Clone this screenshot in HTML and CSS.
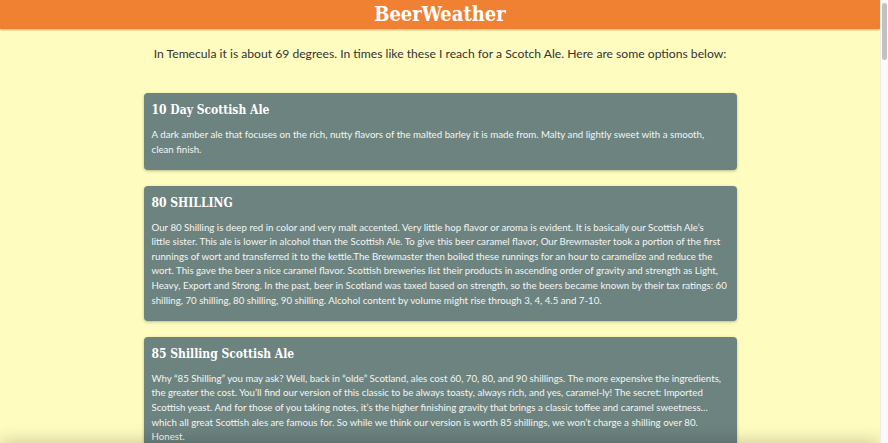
FILE: index.html
```html
<!DOCTYPE html>
<html lang="en">
<head>
<meta charset="utf-8">
<title>BeerWeather</title>
<link rel="stylesheet" href="styles.css">
</head>
<body>
<header class="topbar">
  <h1 class="brand">BeerWeather</h1>
</header>
<main class="content">
  <p class="intro">In Temecula it is about 69 degrees. In times like these I reach for a Scotch Ale. Here are some options below:</p>
  <section class="beers">
    <article class="beer">
      <h2 class="beer-name">10 Day Scottish Ale</h2>
      <p class="beer-desc">A dark amber ale that focuses on the rich, nutty flavors of the malted barley it is made from. Malty and lightly sweet with a smooth, clean finish.</p>
    </article>
    <article class="beer">
      <h2 class="beer-name">80 SHILLING</h2>
      <p class="beer-desc">Our 80 Shilling is deep red in color and very malt accented. Very little hop flavor or aroma is evident. It is basically our Scottish Ale’s<br>little sister. This ale is lower in alcohol than the Scottish Ale. To give this beer caramel flavor, Our Brewmaster took a portion of the first runnings of wort and transferred it to the kettle.The Brewmaster then boiled these runnings for an hour to caramelize and reduce the wort. This gave the beer a nice caramel flavor. Scottish breweries list their products in ascending order of gravity and strength as Light, Heavy, Export and Strong. In the past, beer in Scotland was taxed based on strength, so the beers became known by their tax ratings: 60 shilling, 70 shilling, 80 shilling, 90 shilling. Alcohol content by volume might rise through 3, 4, 4.5 and 7-10.</p>
    </article>
    <article class="beer">
      <h2 class="beer-name">85 Shilling Scottish Ale</h2>
      <p class="beer-desc">Why “85 Shilling” you may ask? Well, back in “olde” Scotland, ales cost 60, 70, 80, and 90 shillings. The more expensive the ingredients, the greater the cost. You’ll find our version of this classic to be always toasty, always rich, and yes, caramel-ly! The secret: Imported Scottish yeast. And for those of you taking notes, it’s the higher finishing gravity that brings a classic toffee and caramel sweetness… which all great Scottish ales are famous for. So while we think our version is worth 85 shillings, we won’t charge a shilling over 80. Honest.</p>
    </article>
  </section>
</main>
<div class="bottom-shade"></div>
<div class="scrollbar"><div class="scrollbar-thumb"></div></div>
</body>
</html>
```
FILE: styles.css
```css
html, body {
  margin: 0;
  padding: 0;
}
body {
  background: #fffcc0;
  font-family: Lato, "Open Sans", sans-serif;
  color: #333;
  margin-right: 8px;
}
.topbar {
  background: #f08132;
  height: 29px;
  display: flex;
  align-items: center;
  justify-content: center;
  box-shadow: 0 1px 2px rgba(120, 90, 20, 0.45);
}
.brand {
  margin: 0;
  color: #fff;
  font-family: "DejaVu Serif Condensed", "DejaVu Serif", serif;
  font-weight: bold;
  font-size: 20px;
  line-height: 29px;
}
.content {
  display: flex;
  flex-direction: column;
  align-items: center;
  padding: 16px 0 40px;
}
.intro {
  margin: 0 0 30px;
  font-size: 12.15px;
  line-height: 18px;
  text-align: center;
}
.beers {
  width: 593px;
  display: flex;
  flex-direction: column;
  gap: 16px;
}
.beer {
  background: #6d837f;
  border-radius: 4px;
  padding: 8px 9px 13.5px 8px;
  box-shadow: 0 1px 3px rgba(60, 60, 40, 0.35);
  color: #fff;
}
.beer-name {
  margin: 0 0 8px;
  font-family: "DejaVu Serif Condensed", "DejaVu Serif", serif;
  font-weight: bold;
  font-size: 12px;
  line-height: 18px;
}
.beer-desc {
  margin: 0;
  font-size: 9.7px;
  line-height: 14.6px;
  color: #f4f6f5;
}
.bottom-shade {
  position: fixed;
  left: 0;
  right: 8px;
  bottom: -20px;
  height: 20px;
  box-shadow: 0 0 18px rgba(0, 0, 0, 0.25);
}
.scrollbar {
  position: fixed;
  top: 0;
  right: 0;
  bottom: 0;
  width: 8px;
  background: #fafafa;
  border-left: 1px solid #ececec;
  box-sizing: border-box;
}
.scrollbar-thumb {
  margin: 3px 1px 0 1px;
  height: 57px;
  border-radius: 3px;
  background: #c2c2c2;
}
```
